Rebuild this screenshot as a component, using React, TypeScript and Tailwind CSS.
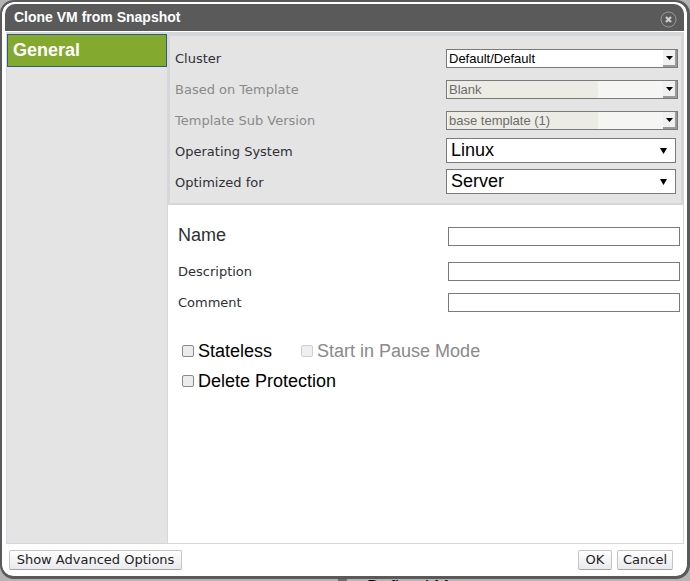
import React from "react";

const dv = "font-['DejaVu_Sans',sans-serif]";

function LegacySelect({ value, disabled }: { value: string; disabled?: boolean }) {
  return (
    <div className={`flex h-[19px] w-[232px] items-stretch border border-[#7a7a7a] ${disabled ? "bg-[#f5f5f3]" : "bg-white"}`}>
      <div className={`flex flex-1 items-center text-[13px] leading-none ${disabled ? "text-[#6d6d6d]" : "pl-[2px] text-black"}`}>
        {disabled ? (
          <div className="ml-[1px] flex h-full w-[150px] items-center bg-[#ecebe4] pl-[1px]">{value}</div>
        ) : (
          value
        )}
      </div>
      <div className="flex w-[14px] items-center justify-center border-b-2 border-r-2 border-[#9a9a9a] bg-[#f0f0f0]">
        <svg width="7" height="4" viewBox="0 0 7 4"><path d="M0 0h7L3.5 4z" fill="#000" /></svg>
      </div>
    </div>
  );
}

function BigSelect({ value }: { value: string }) {
  return (
    <div className="mb-[2px] flex h-[25px] w-[230px] items-center justify-between border border-[#7a7a7a] bg-white pl-[4px] pr-[8px] text-[18px] leading-none text-black">
      <span className="pb-[2px]">{value}</span>
      <svg width="7" height="6" viewBox="0 0 7 6"><path d="M0 0h7L3.5 6z" fill="#000" /></svg>
    </div>
  );
}

function TopRow({ label, disabled, children }: { label: string; disabled?: boolean; children: React.ReactNode }) {
  return (
    <div className="flex h-[31px] items-center justify-between">
      <span className={`${dv} text-[13px] ${disabled ? "text-[#8a8a8a]" : "text-[#2f2f36]"}`}>{label}</span>
      <div className="w-[232px]">{children}</div>
    </div>
  );
}

function Field({ label, big }: { label: string; big?: boolean }) {
  return (
    <div className="flex h-[31px] items-center justify-between">
      <span className={big ? "pb-[3px] text-[18px] text-[#2f2f36]" : `${dv} text-[13px] text-[#2f2f36]`}>{label}</span>
      <div className="h-[19px] w-[232px] border border-[#7a7a7a] bg-white" />
    </div>
  );
}

function Check({ label, disabled }: { label: string; disabled?: boolean }) {
  return (
    <div className={`flex items-center gap-[4px] text-[18px] leading-none ${disabled ? "text-[#8a8a8a]" : "text-black"}`}>
      <span className={`h-[12px] w-[12px] rounded-[2px] border ${disabled ? "border-[#cfcfcf] bg-[#efefef]" : "border-[#8a8a8a] bg-[#ececec]"}`} />
      <span>{label}</span>
    </div>
  );
}

function Btn({ label, w }: { label: string; w: string }) {
  return (
    <button className={`${dv} ${w} h-[20px] rounded-[2px] border border-[#c4c4c4] border-b-[#a5a5a5] bg-gradient-to-b from-[#ffffff] to-[#e9e9ee] pb-[2px] text-[13px] leading-none text-[#222]`}>
      {label}
    </button>
  );
}

export default function App() {
  return (
    <div className="h-[581px] w-[690px] overflow-hidden bg-[#b4b4b4] font-['Liberation_Sans',sans-serif]">
      <div className="h-[579px] w-[690px] overflow-hidden rounded-[14px] border-b-[3px] border-l-[2px] border-r-[3px] border-t-[2px] border-[#5a5a5a] bg-[#5a5a5a]">
        <div className="flex h-full flex-col rounded-b-[11px] rounded-t-[12px] bg-white pl-[3px] pr-[3px] pt-[2px]">
          <div className="flex h-[27px] shrink-0 items-center justify-between rounded-t-[10px] bg-[#5a5a5a] pl-[9px] pr-[7px]">
            <span className="text-[14px] font-bold text-white">Clone VM from Snapshot</span>
            <svg className="mt-[3px]" width="17" height="17" viewBox="0 0 17 17" fill="none">
              <circle cx="8.5" cy="8.5" r="7.5" stroke="#9c9c9c" />
              <path d="M6 6l5 5M11 6l-5 5" stroke="#cfcfcf" strokeWidth="2.2" />
            </svg>
          </div>
          <div className="flex min-h-0 flex-1 flex-col pl-[1px] pt-[1px]">
            <div className="flex min-h-0 flex-1 border border-t-2 border-[#d3d8dc]">
              <div className="w-[161px] shrink-0 border-r border-[#d3d8dc] bg-[#e4e4e4]">
                <div className="flex h-[33px] items-start border border-[#32597e] bg-[#83a92f] pl-[5px] pt-[2px] text-[18px] font-bold text-white">
                  General
                </div>
              </div>
              <div className="min-w-0 flex-1">
                <div className="border-[2px] border-[#d6d6d6] bg-[#e4e4e4] pb-[5px] pl-[5px] pr-[3px] pt-[7px]">
                  <TopRow label="Cluster"><LegacySelect value="Default/Default" /></TopRow>
                  <TopRow label="Based on Template" disabled><LegacySelect value="Blank" disabled /></TopRow>
                  <TopRow label="Template Sub Version" disabled><LegacySelect value="base template (1)" disabled /></TopRow>
                  <TopRow label="Operating System"><BigSelect value="Linux" /></TopRow>
                  <TopRow label="Optimized for"><BigSelect value="Server" /></TopRow>
                </div>
                <div className="pl-[10px] pr-[3px] pt-[16px]">
                  <div className="mb-[4px]"><Field label="Name" big /></div>
                  <Field label="Description" />
                  <Field label="Comment" />
                  <div className="mt-[18px] flex h-[30px] items-center pl-[4px]">
                    <Check label="Stateless" />
                    <div className="ml-[29px]"><Check label="Start in Pause Mode" disabled /></div>
                  </div>
                  <div className="flex h-[30px] items-center pl-[4px]">
                    <Check label="Delete Protection" />
                  </div>
                </div>
              </div>
            </div>
            <div className="flex h-[32px] shrink-0 items-start justify-between pl-[3px] pr-[11px] pt-[6px]">
              <Btn label="Show Advanced Options" w="w-[173px]" />
              <div className="flex gap-[5px]">
                <Btn label="OK" w="w-[34px]" />
                <Btn label="Cancel" w="w-[56px]" />
              </div>
            </div>
          </div>
        </div>
      </div>
      <div className="relative h-[2px] overflow-visible">
        <span className="absolute left-[338px] top-0 h-[2px] w-[9px] bg-[#6d6d6d]" />
        <span className="absolute left-[367px] top-[-2px] text-[18px] leading-[20px] text-black">Defined M</span>
      </div>
    </div>
  );
}
